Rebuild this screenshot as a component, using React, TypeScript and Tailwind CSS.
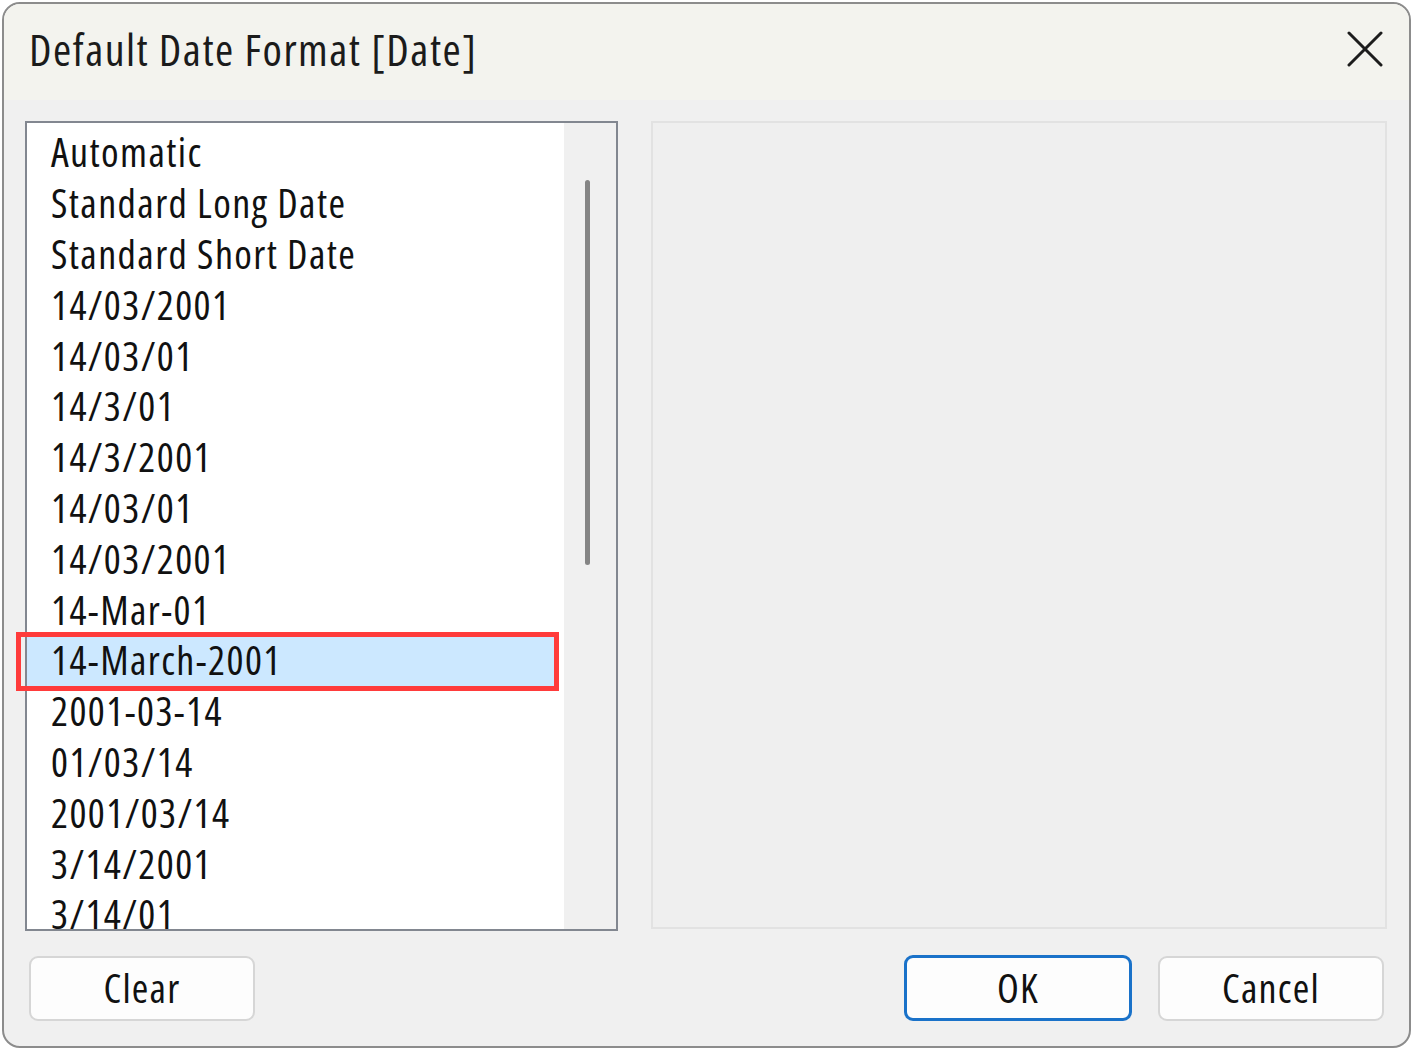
import React from 'react'

const formats = [
  'Automatic',
  'Standard Long Date',
  'Standard Short Date',
  '14/03/2001',
  '14/03/01',
  '14/3/01',
  '14/3/2001',
  '14/03/01',
  '14/03/2001',
  '14-Mar-01',
  '14-March-2001',
  '2001-03-14',
  '01/03/14',
  '2001/03/14',
  '3/14/2001',
  '3/14/01',
]

const selected = 10

function CloseIcon() {
  return (
    <svg width="36" height="36" viewBox="0 0 36 36" fill="none">
      <path d="M2 2 L34 34 M34 2 L2 34" stroke="#1c1c1c" strokeWidth="3" strokeLinecap="round" />
    </svg>
  )
}

export default function App() {
  return (
    <div
      className="relative w-[1413px] h-[1050px] bg-white overflow-hidden pt-[2px] pl-[2px] [font-stretch:condensed] font-medium"
      style={{ fontFamily: '"Open Sans", sans-serif' }}
    >
      <div className="w-[1409px] h-[1046px] border-2 border-[#8c8c8c] rounded-[18px] overflow-hidden flex flex-col bg-[#f0f0f0]">
        {/* title bar */}
        <div className="h-[96px] shrink-0 bg-[#f3f3ee] flex items-center justify-between pl-[25px] pr-[26px] pb-[6px]">
          <span className="text-[44px] tracking-[1.5px] text-[#1b1b1b] leading-none">Default Date Format [Date]</span>
          <CloseIcon />
        </div>

        {/* body */}
        <div className="flex-1 flex flex-col px-[21px] pt-[21px]">
          <div className="flex gap-[33px]">
            <div className="w-[593px] h-[810px] border-2 border-[#828790] bg-white flex overflow-hidden">
              <div className="flex-1 pt-[4px]">
                {formats.map((f, i) => (
                  <div
                    key={i}
                    className={
                      i === selected
                        ? 'h-[50.8px] flex items-center pl-[24px] mr-[10px] bg-[#cce8ff] text-[40px] tracking-[1.4px] text-[#111]'
                        : 'h-[50.8px] flex items-center pl-[24px] text-[40px] tracking-[1.4px] text-[#111]'
                    }
                  >
                    {f}
                  </div>
                ))}
              </div>
              {/* scrollbar */}
              <div className="w-[52px] bg-[#f0f0f0] pt-[57px] pl-[21px]">
                <div className="w-[5px] h-[385px] rounded-full bg-[#858585]" />
              </div>
            </div>
            <div className="w-[736px] h-[808px] border-2 border-[#e2e2e2] bg-[#efefef]" />
          </div>

          {/* buttons */}
          <div className="flex items-center mt-[24px] px-[4px] text-[40px] tracking-[1.2px] text-[#111]">
            <button className="w-[226px] h-[65px] rounded-[9px] border-2 border-[#d6d6d6] bg-[#fdfdfd]">
              Clear
            </button>
            <div className="flex-1" />
            <button className="w-[228px] h-[66px] rounded-[9px] border-[3px] border-[#1a72c9] bg-[#fdfdfd]">
              OK
            </button>
            <button className="ml-[26px] w-[226px] h-[65px] rounded-[9px] border-2 border-[#d6d6d6] bg-[#fdfdfd]">
              Cancel
            </button>
          </div>
        </div>
      </div>

      {/* annotation box */}
      <div className="absolute left-[16px] top-[632px] w-[543px] h-[59px] border-[5px] border-[#ff3b3b]" />
    </div>
  )
}
